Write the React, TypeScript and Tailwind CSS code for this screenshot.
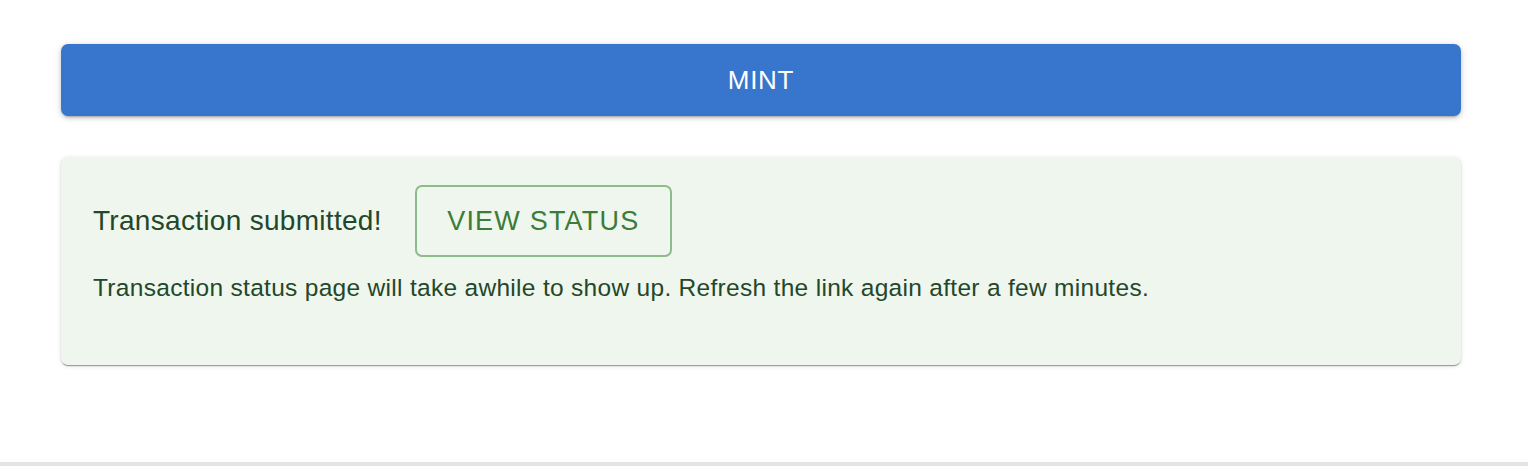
export default function App() {
  return (
    <div className="flex min-h-[466px] flex-col bg-white font-['Liberation_Sans',Arial,sans-serif]">
      <div className="flex-1 pl-[61px] pr-[67px] pt-[44px]">
        {/* Mint */}
        <button
          type="button"
          className="flex h-[72px] w-full items-center justify-center rounded-[7px] bg-[#3875cc] text-[26px] tracking-[0.7px] text-white shadow-[0_3px_2px_-2px_rgba(0,0,0,0.2),0_2px_4px_0_rgba(0,0,0,0.14),0_1px_9px_0_rgba(0,0,0,0.12)]"
        >
          MINT
        </button>

        {/* Alert */}
        <div className="mt-[41px] rounded-[7px] bg-[#eef6ee] px-8 pb-[60px] pt-[28px] text-[#24472a] shadow-[0_2px_1px_-1px_rgba(0,0,0,0.3),0_1px_2px_0_rgba(0,0,0,0.14),0_1px_5px_0_rgba(0,0,0,0.1)]">
          <div className="flex items-center gap-[33px]">
            <span className="text-[28px] leading-none tracking-[0.3px]">Transaction submitted!</span>
            <button
              type="button"
              className="flex h-[72px] w-[257px] items-center justify-center rounded-[7px] border-2 border-[#8fbb8c] text-[27px] tracking-[1.2px] text-[#3d7c38]"
            >
              VIEW STATUS
            </button>
          </div>
          <p className="mt-[13px] text-[24.5px] leading-[35px] tracking-[0.3px]">
            Transaction status page will take awhile to show up. Refresh the link again after a few minutes.
          </p>
        </div>
      </div>
      <div className="h-[4px] bg-[#e4e4e8]" />
    </div>
  );
}
